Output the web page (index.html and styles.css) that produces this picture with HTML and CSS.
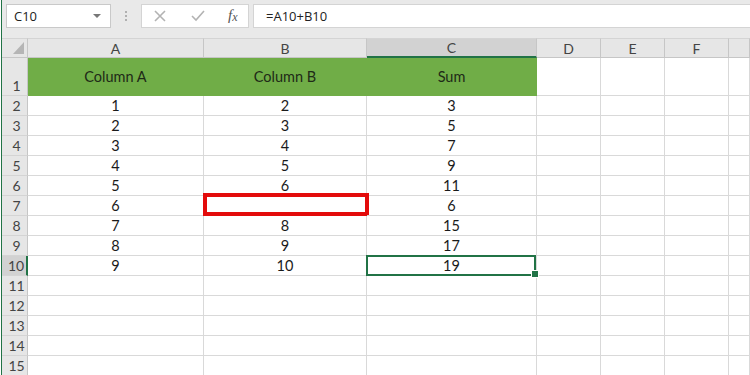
FILE: index.html
```html
<!DOCTYPE html>
<html lang="en">
<head>
  <meta charset="UTF-8" />
  <title>Sheet – Sum of Columns</title>
  <link rel="stylesheet" href="styles.css">
</head>
<body>
  <div class="app">

    <div class="toolbar">
      <div class="name-box">
        <span>C10</span>
        <span class="caret"></span>
      </div>
      <div class="grip"><i></i><i></i><i></i></div>
      <div class="fx-buttons">
        <svg class="btn-icon" width="14" height="14" viewBox="0 0 14 14">
          <path d="M2 2 L12 12 M12 2 L2 12" stroke="#b3b3b3" stroke-width="1.6" fill="none"/>
        </svg>
        <svg class="btn-icon" width="16" height="14" viewBox="0 0 16 14">
          <path d="M2 7 L6 11 L14 2" stroke="#b3b3b3" stroke-width="1.6" fill="none"/>
        </svg>
        <span class="fx">f<sub>x</sub></span>
      </div>
      <div class="formula">=A10+B10</div>
    </div>

    <div class="sheet">
      <div class="hdr corner"><span class="tri"></span></div>
      <div class="hdr col">A</div>
      <div class="hdr col">B</div>
      <div class="hdr col active">C</div>
      <div class="hdr col">D</div>
      <div class="hdr col">E</div>
      <div class="hdr col">F</div>
      <div class="hdr col"></div>

      <div class="hdr row tall">1</div>
      <div class="cell head">Column A</div>
      <div class="cell head">Column B</div>
      <div class="cell head">Sum</div>
      <div class="cell tall"></div><div class="cell tall"></div><div class="cell tall"></div><div class="cell tall"></div>

      <div class="hdr row">2</div>
      <div class="cell">1</div><div class="cell">2</div><div class="cell">3</div>
      <div class="cell"></div><div class="cell"></div><div class="cell"></div><div class="cell"></div>

      <div class="hdr row">3</div>
      <div class="cell">2</div><div class="cell">3</div><div class="cell">5</div>
      <div class="cell"></div><div class="cell"></div><div class="cell"></div><div class="cell"></div>

      <div class="hdr row">4</div>
      <div class="cell">3</div><div class="cell">4</div><div class="cell">7</div>
      <div class="cell"></div><div class="cell"></div><div class="cell"></div><div class="cell"></div>

      <div class="hdr row">5</div>
      <div class="cell">4</div><div class="cell">5</div><div class="cell">9</div>
      <div class="cell"></div><div class="cell"></div><div class="cell"></div><div class="cell"></div>

      <div class="hdr row">6</div>
      <div class="cell">5</div><div class="cell">6</div><div class="cell">11</div>
      <div class="cell"></div><div class="cell"></div><div class="cell"></div><div class="cell"></div>

      <div class="hdr row">7</div>
      <div class="cell">6</div><div class="cell missing"></div><div class="cell">6</div>
      <div class="cell"></div><div class="cell"></div><div class="cell"></div><div class="cell"></div>

      <div class="hdr row">8</div>
      <div class="cell">7</div><div class="cell">8</div><div class="cell">15</div>
      <div class="cell"></div><div class="cell"></div><div class="cell"></div><div class="cell"></div>

      <div class="hdr row">9</div>
      <div class="cell">8</div><div class="cell">9</div><div class="cell">17</div>
      <div class="cell"></div><div class="cell"></div><div class="cell"></div><div class="cell"></div>

      <div class="hdr row active">10</div>
      <div class="cell">9</div><div class="cell">10</div><div class="cell selected">19</div>
      <div class="cell"></div><div class="cell"></div><div class="cell"></div><div class="cell"></div>

      <div class="hdr row">11</div>
      <div class="cell"></div><div class="cell"></div><div class="cell"></div>
      <div class="cell"></div><div class="cell"></div><div class="cell"></div><div class="cell"></div>

      <div class="hdr row">12</div>
      <div class="cell"></div><div class="cell"></div><div class="cell"></div>
      <div class="cell"></div><div class="cell"></div><div class="cell"></div><div class="cell"></div>

      <div class="hdr row">13</div>
      <div class="cell"></div><div class="cell"></div><div class="cell"></div>
      <div class="cell"></div><div class="cell"></div><div class="cell"></div><div class="cell"></div>

      <div class="hdr row">14</div>
      <div class="cell"></div><div class="cell"></div><div class="cell"></div>
      <div class="cell"></div><div class="cell"></div><div class="cell"></div><div class="cell"></div>

      <div class="hdr row">15</div>
      <div class="cell"></div><div class="cell"></div><div class="cell"></div>
      <div class="cell"></div><div class="cell"></div><div class="cell"></div><div class="cell"></div>
    </div>

  </div>
</body>
</html>
```

FILE: styles.css
```css
* { box-sizing: border-box; margin: 0; padding: 0; }

body {
  width: 750px;
  height: 375px;
  overflow: hidden;
  background: #fff;
  font-family: 'Lato', 'Liberation Sans', sans-serif;
  color: #1a1a1a;
}

.app {
  margin-left: 1px;
  border-left: 1px solid #217346;
  height: 375px;
  overflow: hidden;
}

/* formula bar */
.toolbar {
  height: 38px;
  background: #e9e9e9;
  display: flex;
  align-items: flex-start;
  padding: 4px 0 0 4px;
}

.name-box {
  width: 105px;
  height: 24px;
  background: #fff;
  border: 1px solid #c9c9c9;
  display: flex;
  align-items: center;
  justify-content: space-between;
  padding: 0 9px 0 7px;
  font-family: 'Open Sans', sans-serif;
  font-size: 13px;
  color: #222;
}

.caret {
  width: 0;
  height: 0;
  border-left: 4px solid transparent;
  border-right: 4px solid transparent;
  border-top: 4px solid #777;
}

.grip {
  width: 30px;
  height: 24px;
  display: flex;
  flex-direction: column;
  align-items: center;
  justify-content: center;
  gap: 2px;
}

.grip i {
  width: 2px;
  height: 2px;
  background: #b0b0b0;
}

.fx-buttons {
  width: 108px;
  height: 24px;
  background: #fff;
  border: 1px solid #d4d4d4;
  display: flex;
  align-items: center;
  padding-left: 11px;
}

.btn-icon { margin-right: 23px; }
.btn-icon + .btn-icon { margin-right: 22px; }

.fx {
  font-family: 'Liberation Serif', serif;
  font-style: italic;
  font-size: 15px;
  color: #555;
}

.fx sub {
  font-size: 12px;
  vertical-align: -1px;
}

.formula {
  flex: 1;
  height: 24px;
  margin-left: 4px;
  background: #fff;
  border: 1px solid #d4d4d4;
  border-right: none;
  padding-left: 12px;
  font-family: 'Open Sans', sans-serif;
  font-size: 13px;
  line-height: 22px;
  color: #222;
}

/* grid */
.sheet {
  display: grid;
  grid-template-columns: 26px 176px 163px 170px 64px 64px 64px 21px;
  grid-template-rows: 20px 38px repeat(14, 20px);
  font-size: 14.5px;
}

.hdr {
  background: #e6e6e6;
  border-right: 1px solid #c6c6c6;
  border-bottom: 1px solid #c6c6c6;
  color: #444;
  display: flex;
  align-items: center;
  justify-content: center;
  font-size: 14px;
}

.hdr.col { border-top: 1px solid #d4d4d4; }
.hdr.corner { border-top: 1px solid #d4d4d4; position: relative; }

.tri {
  position: absolute;
  right: 3px;
  bottom: 3px;
  width: 0;
  height: 0;
  border-left: 11px solid transparent;
  border-bottom: 12px solid #b5b5b5;
}

.hdr.row {
  padding-left: 4px;
  align-items: flex-end;
  padding-bottom: 1px;
  border-bottom-color: #d4d4d4;
}

.hdr.col.active {
  background: #d2d2d2;
  border-bottom: 2px solid #217346;
}

.hdr.row.active {
  background: #d2d2d2;
  border-right: 2px solid #217346;
}

.cell {
  border-right: 1px solid #d9d9d9;
  border-bottom: 1px solid #d9d9d9;
  display: flex;
  align-items: flex-end;
  justify-content: center;
  padding-bottom: 1px;
  position: relative;
}

.cell.head {
  background: #70ad47;
  border-color: #70ad47;
  align-items: center;
  padding-bottom: 0;
  color: #1e2a17;
}

.cell.missing::after {
  content: '';
  position: absolute;
  top: -3px;
  left: -1px;
  right: -3px;
  bottom: -1px;
  border: 4px solid #e30b0b;
}

.cell.selected::after {
  content: '';
  position: absolute;
  top: -1px;
  left: -1px;
  right: 0;
  bottom: -1px;
  border: 2px solid #217346;
}

.cell.selected::before {
  content: '';
  position: absolute;
  right: -3px;
  bottom: -3px;
  width: 6px;
  height: 6px;
  background: #217346;
  border: 1px solid #fff;
  z-index: 2;
}
```
